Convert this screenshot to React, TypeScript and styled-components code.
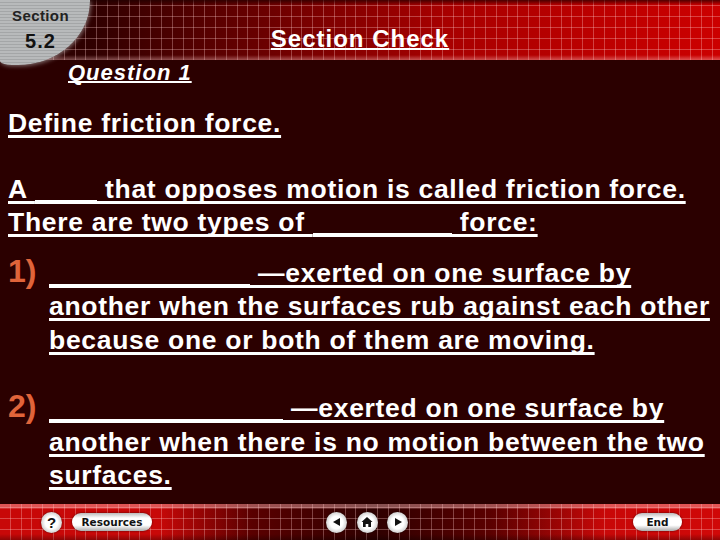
import React from 'react';
import styled, { createGlobalStyle } from 'styled-components';

const Global = createGlobalStyle`
    html, body {
        margin: 0;
        padding: 0;
        background: #2b0000;
    }
`;

const gridLines = `
    repeating-linear-gradient(90deg, transparent 0, transparent 9.8px, rgba(255,205,205,.32) 9.8px, rgba(255,205,205,.32) 10.8px),
    repeating-linear-gradient(0deg, transparent 0, transparent 9.9px, rgba(255,205,205,.32) 9.9px, rgba(255,205,205,.32) 10.9px)
`;

const Page = styled.div`
    width: 720px;
    height: 540px;
    overflow: hidden;
    display: flex;
    flex-direction: column;
    background: #2b0000;
    color: #fff;
    font-family: "Liberation Sans", Arial, sans-serif;
`;

const Header = styled.header`
    height: 60px;
    flex: none;
    display: grid;
    grid-template-columns: 90px 1fr 90px;
    background:
        linear-gradient(180deg, rgba(30,0,0,.7) 0, rgba(30,0,0,0) 5px, rgba(255,200,200,0) 55px, rgba(255,200,200,.4) 60px),
        ${gridLines},
        linear-gradient(90deg, #2e0000 0, #2e0000 12%, #620000 33%, #a80000 62%, #cc0000 100%);
`;

const Disc = styled.div`
    width: 90px;
    height: 65px;
    border-bottom-right-radius: 72px 64px;
    border-bottom-left-radius: 12px 4px;
    background: repeating-linear-gradient(180deg, #b8babb 0, #b8babb 2px, #a4a6a7 2px, #a4a6a7 3px);
    box-shadow: 1px 1px 4px rgba(200,200,200,.55);
    display: flex;
    flex-direction: column;
    align-items: center;
    color: #222;
    padding-right: 9px;
    box-sizing: border-box;
`;

const DiscLabel = styled.div`
    font-size: 15px;
    font-weight: bold;
    letter-spacing: 0.4px;
    line-height: 16px;
    margin-top: 8px;
`;

const DiscNumber = styled.div`
    font-size: 20px;
    font-weight: bold;
    letter-spacing: 1px;
    line-height: 24px;
    margin-top: 5px;
    color: #111;
`;

const Title = styled.h1`
    margin: 0;
    padding-top: 25px;
    text-align: center;
    font-size: 24px;
    line-height: 28px;
    font-weight: bold;
    letter-spacing: 1px;
    text-decoration: underline;
    text-decoration-thickness: 2px;
    text-decoration-skip-ink: none;
`;

const Main = styled.main`
    flex: 1;
    padding: 1px 0 0 8px;
    display: flex;
    flex-direction: column;
`;

const QuestionLabel = styled.div`
    margin-left: 60px;
    font-size: 22px;
    line-height: 24px;
    font-style: italic;
    font-weight: bold;
    letter-spacing: 1px;
    text-decoration: underline;
    text-decoration-thickness: 2px;
    text-decoration-skip-ink: none;
`;

const Line = styled.p<{ $top?: number }>`
    margin: ${p => p.$top ?? 0}px 0 0;
    font-size: 26.5px;
    line-height: 33.5px;
    font-weight: bold;
    letter-spacing: 0.7px;
    white-space: nowrap;
    text-decoration: underline;
    text-decoration-thickness: 2.5px;
    text-underline-offset: 3px;
    text-decoration-skip-ink: none;
`;

const Blank = styled.span<{ $width: number }>`
    display: inline-block;
    width: ${p => p.$width}px;
    height: 4px;
    background: #fff;
    vertical-align: -6px;
`;

const Item = styled.div<{ $top: number }>`
    margin-top: ${p => p.$top}px;
    display: grid;
    grid-template-columns: 41px 1fr;
    align-items: first baseline;
`;

const Num = styled.div`
    color: #e0643a;
    font-size: 32px;
    line-height: 33.5px;
    font-weight: bold;
`;

const Footer = styled.footer`
    height: 36px;
    flex: none;
    display: flex;
    align-items: center;
    box-sizing: border-box;
    padding: 0 0 0 41px;
    background:
        linear-gradient(180deg, rgba(255,190,190,.42) 0, rgba(255,190,190,.42) 4px, rgba(0,0,0,0) 5px, rgba(0,0,0,0) 30px, rgba(0,0,0,.3) 36px),
        ${gridLines},
        linear-gradient(90deg, #c80808 0, #c80808 22%, #5a0000 35%, #2e0000 52%, #5a0000 68%, #c80808 84%, #d00808 100%);
`;

const Round = styled.button`
    width: 21px;
    height: 21px;
    padding: 0;
    flex: none;
    border: none;
    border-radius: 50%;
    background: radial-gradient(circle, #fff 0, #fff 42%, #b0b0b0 90%, #888 100%);
    box-shadow: 0 0 2px rgba(0,0,0,.7);
    color: #111;
    font: bold 15px "Liberation Sans", Arial, sans-serif;
    display: flex;
    align-items: center;
    justify-content: center;
`;

const Pill = styled.button<{ $width: number; $left: number }>`
    width: ${p => p.$width}px;
    margin-left: ${p => p.$left}px;
    height: 18px;
    padding: 0;
    flex: none;
    border: none;
    border-radius: 9px;
    background: linear-gradient(180deg, #bbb 0, #fff 28%, #fff 68%, #aaa 100%);
    box-shadow: 0 0 2px rgba(0,0,0,.7);
    color: #111;
    font: bold 10.5px "DejaVu Sans", sans-serif;
`;

const NavGroup = styled.div<{ $left: number }>`
    margin-left: ${p => p.$left}px;
    display: flex;
    gap: 9.5px;
`;

const Arrow = ({ d }: { d: string }) => (
    <svg width="12" height="12" viewBox="0 0 12 12"><path d={d} fill="#111" /></svg>
);

export default function App()
{
    return (
        <Page>
            <Global />
            <Header>
                <Disc>
                    <DiscLabel>Section</DiscLabel>
                    <DiscNumber>5.2</DiscNumber>
                </Disc>
                <Title>Section Check</Title>
            </Header>
            <Main>
                <QuestionLabel>Question 1</QuestionLabel>
                <Line $top={22}>Define friction force.</Line>
                <Line $top={32}>A <Blank $width={62} /> that opposes motion is called friction force.</Line>
                <Line>There are two types of <Blank $width={139} /> force:</Line>
                <Item $top={15}>
                    <Num>1)</Num>
                    <div>
                        <Line><Blank $width={201} /> —exerted on one surface by</Line>
                        <Line>another when the surfaces rub against each other</Line>
                        <Line>because one or both of them are moving.</Line>
                    </div>
                </Item>
                <Item $top={33}>
                    <Num>2)</Num>
                    <div>
                        <Line><Blank $width={234} /> —exerted on one surface by</Line>
                        <Line>another when there is no motion between the two</Line>
                        <Line>surfaces.</Line>
                    </div>
                </Item>
            </Main>
            <Footer>
                <Round>?</Round>
                <Pill $width={80} $left={10}>Resources</Pill>
                <NavGroup $left={174}>
                    <Round><Arrow d="M9 2v8L2 6z" /></Round>
                    <Round><Arrow d="M6 1l5.5 5H10v5H7.3V8H4.7v3H2V6H.5z" /></Round>
                    <Round><Arrow d="M3 2v8l7-4z" /></Round>
                </NavGroup>
                <Pill $width={49} $left={225}>End</Pill>
            </Footer>
        </Page>
    );
}
